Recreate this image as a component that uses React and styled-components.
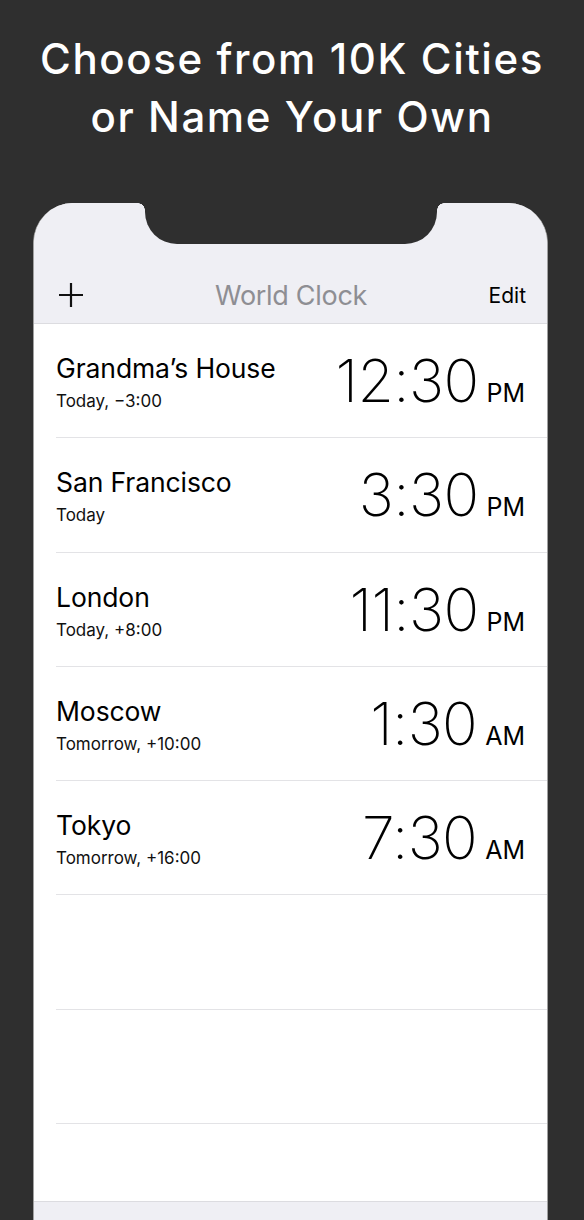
import React from "react";
import styled, { createGlobalStyle } from "styled-components";

const Global = createGlobalStyle`
  html, body {
    margin: 0;
    padding: 0;
    background: #2f2f2f;
  }
  body {
    height: 1220px;
    overflow: hidden;
    font-family: Inter, "Liberation Sans", sans-serif;
    -webkit-font-smoothing: antialiased;
  }
`;

const Page = styled.div`
  width: 584px;
  height: 1220px;
  background: #2f2f2f;
  display: flex;
  flex-direction: column;
  overflow: hidden;
`;

const Heading = styled.h1`
  margin: 30px 0 0;
  color: #ffffff;
  font-family: Inter, "Liberation Sans", sans-serif;
  font-weight: 500;
  font-size: 42px;
  line-height: 58px;
  text-align: center;
  letter-spacing: 1.6px;
`;

const Phone = styled.div`
  position: relative;
  margin: 57px 0 0 33px;
  width: 515px;
  flex: 1;
  box-sizing: border-box;
  background: #ffffff;
  border-radius: 40px 40px 0 0;
  border-left: 1px solid #a0a0a0;
  border-right: 1px solid #a0a0a0;
  overflow: hidden;
  display: flex;
  flex-direction: column;
`;

const Notch = styled.div`
  position: absolute;
  top: 0;
  left: 111px;
  width: 292px;
  height: 41px;
  background: #2f2f2f;
  border-radius: 0 0 32px 32px;

  &::before,
  &::after {
    content: "";
    position: absolute;
    top: 0;
    width: 7px;
    height: 7px;
  }
  &::before {
    left: -7px;
    background: radial-gradient(circle at 0 100%, transparent 6.5px, #2f2f2f 7px);
  }
  &::after {
    right: -7px;
    background: radial-gradient(circle at 100% 100%, transparent 6.5px, #2f2f2f 7px);
  }
`;

const NavBar = styled.div`
  height: 121px;
  box-sizing: border-box;
  padding: 69px 21px 0 22px;
  background: #efeff4;
  border-bottom: 1px solid #dcdce0;
  display: grid;
  grid-template-columns: 80px 1fr 80px;
  align-items: start;
`;

const NavCell = styled.div`
  height: 46px;
  display: flex;
  align-items: center;
  justify-content: ${(p) => p.$justify || "center"};
`;

const Title = styled.span`
  color: #8e8e93;
  font-size: 27px;
  font-weight: 400;
  letter-spacing: -0.3px;
`;

const EditButton = styled.span`
  color: #000;
  font-size: 21px;
  font-weight: 400;
`;

const PlusIcon = () => (
  <svg width="26" height="26" viewBox="0 0 26 26" style={{ marginLeft: 2 }}>
    <path d="M13 1v24M1 13h24" stroke="#111" strokeWidth="2.2" fill="none" />
  </svg>
);

const List = styled.div`
  display: flex;
  flex-direction: column;
`;

const Row = styled.div`
  height: 114.3px;
  box-sizing: border-box;
  padding-left: 22px;
  flex-shrink: 0;
`;

const RowInner = styled.div`
  height: 100%;
  box-sizing: border-box;
  border-bottom: 1px solid #e3e3e6;
  padding-right: 22px;
  display: flex;
  justify-content: space-between;
  align-items: flex-start;
`;

const CityInfo = styled.div`
  padding-top: 28px;
  display: flex;
  flex-direction: column;
`;

const CityName = styled.div`
  color: #000;
  font-size: 26.5px;
  line-height: 32px;
  font-weight: 400;
  letter-spacing: -0.1px;
`;

const Offset = styled.div`
  margin-top: 5px;
  color: #111;
  font-size: 17px;
  line-height: 24px;
  font-weight: 400;
`;

const TimeBox = styled.div`
  padding-top: 28px;
  display: flex;
  align-items: baseline;
  gap: 8px;
`;

const Clock = styled.span`
  color: #000;
  font-size: 59px;
  line-height: 58px;
  font-weight: 150;
  letter-spacing: -0.6px;
`;

const Meridiem = styled.span`
  color: #000;
  font-size: 25px;
  font-weight: 400;
`;

const Spacer = styled.div`
  flex: 1;
`;

const TabBar = styled.div`
  height: 18px;
  flex-shrink: 0;
  background: #efeff4;
  border-top: 1px solid #dcdce0;
`;

const cities = [
  { name: "Grandma’s House", offset: "Today, −3:00", time: "12:30", ampm: "PM" },
  { name: "San Francisco", offset: "Today", time: "3:30", ampm: "PM" },
  { name: "London", offset: "Today, +8:00", time: "11:30", ampm: "PM" },
  { name: "Moscow", offset: "Tomorrow, +10:00", time: "1:30", ampm: "AM" },
  { name: "Tokyo", offset: "Tomorrow, +16:00", time: "7:30", ampm: "AM" },
];

export default function App() {
  return (
    <>
      <Global />
      <Page>
        <Heading>
          Choose from 10K Cities
          <br />
          or Name Your Own
        </Heading>
        <Phone>
          <NavBar>
            <NavCell $justify="flex-start">
              <PlusIcon />
            </NavCell>
            <NavCell>
              <Title>World Clock</Title>
            </NavCell>
            <NavCell $justify="flex-end">
              <EditButton>Edit</EditButton>
            </NavCell>
          </NavBar>
          <List>
            {cities.map((c) => (
              <Row key={c.name}>
                <RowInner>
                  <CityInfo>
                    <CityName>{c.name}</CityName>
                    <Offset>{c.offset}</Offset>
                  </CityInfo>
                  <TimeBox>
                    <Clock>{c.time}</Clock>
                    <Meridiem>{c.ampm}</Meridiem>
                  </TimeBox>
                </RowInner>
              </Row>
            ))}
            <Row>
              <RowInner />
            </Row>
            <Row>
              <RowInner />
            </Row>
          </List>
          <Spacer />
          <TabBar />
          <Notch />
        </Phone>
      </Page>
    </>
  );
}
